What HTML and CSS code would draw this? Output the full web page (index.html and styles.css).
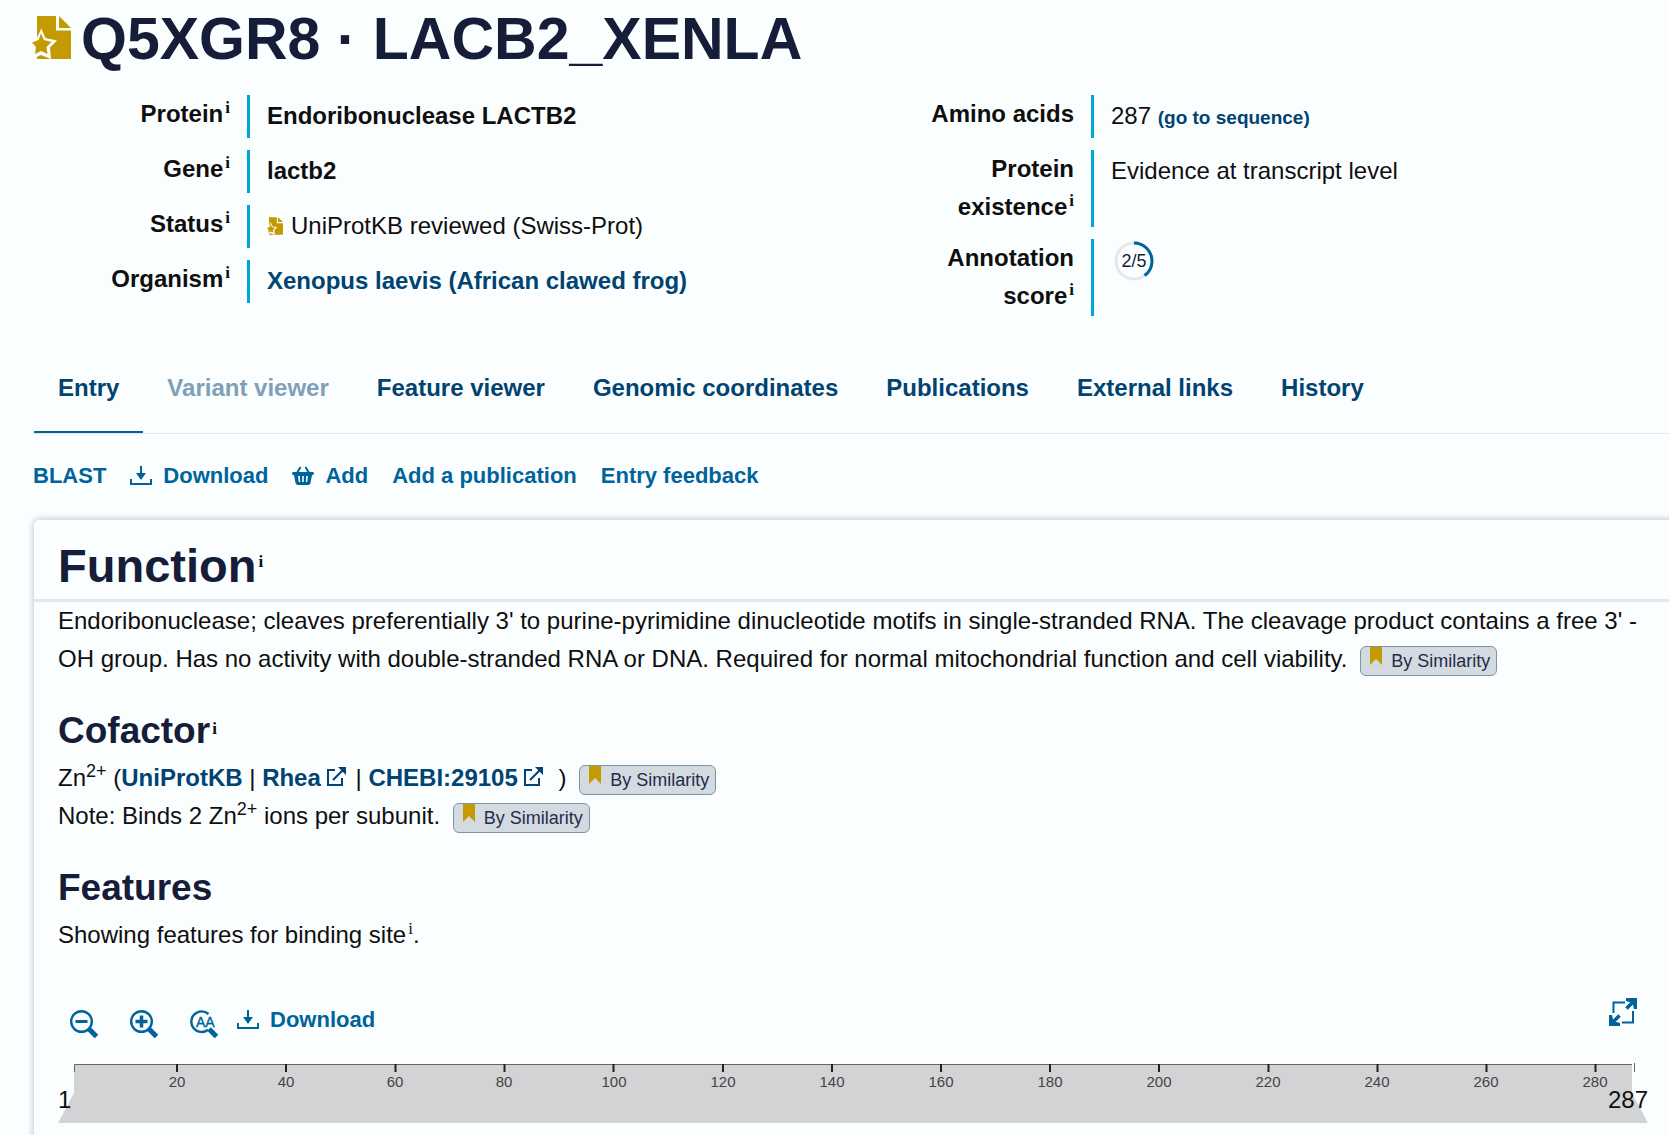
FILE: index.html
```html
<!DOCTYPE html>
<html lang="en">
<head>
<meta charset="utf-8">
<meta name="viewport" content="width=device-width, initial-scale=1">
<title>Q5XGR8 · LACB2_XENLA</title>
<link rel="stylesheet" href="styles.css">
</head>
<body>
<svg class="defs" width="0" height="0" aria-hidden="true">
  <symbol id="reviewed" viewBox="0 0 39 43">
    <path fill="#c39b00" d="M5 0H24V14.500H39V43H5Z"/>
    <path fill="#c39b00" d="M27 0L39 12H27Z"/>
    <path fill="#fbfeff" d="M9 12L13.500 22L25 24.500L18 31.500L19 43L9 39L0 43V12Z"/>
    <path fill="#c39b00" d="M5 0H9V13L5 22ZM9 17.500L12 24L19.500 26L14.500 31L15.500 38L9 35L3 38L4 31L0 26.500L6.500 24Z"/>
    <path fill="#c39b00" d="M5 43L9 41L13 43Z"/>
  </symbol>
  <symbol id="download" viewBox="0 0 22 20">
    <path fill="currentColor" d="M0 13H2V17H20V13H22V19H0ZM10 0H12V7H16L11 14L6 7H10Z"/>
  </symbol>
  <symbol id="basket" viewBox="0 0 22 20">
    <path fill="none" stroke="currentColor" stroke-width="2" d="M5 7L8.500 1M17 7L13.500 1"/>
    <path fill="currentColor" fill-rule="evenodd" d="M1 6H21Q22 6 22 8Q22 9 20 9L18.500 17Q18 19 16 19H6Q4 19 3.500 17L2 9Q0 9 0 8Q0 6 1 6ZM6 10L6.800 16H8.200L7.800 10ZM10.200 10V16H11.800V10ZM14.200 10L13.800 16H15.200L16 10Z"/>
  </symbol>
  <symbol id="external" viewBox="0 0 20 20">
    <path fill="none" stroke="currentColor" stroke-width="2" d="M9 3H2V18H16V11M7 13L17 3"/>
    <path fill="currentColor" d="M12 0H20V8L17.500 5.500L14.500 2.500Z"/>
  </symbol>
  <symbol id="lens" viewBox="0 0 28 28">
    <circle cx="11.500" cy="11.500" r="10.300" fill="none" stroke="currentColor" stroke-width="2.400"/>
    <path fill="none" stroke="currentColor" stroke-width="5" stroke-linejoin="round" d="M18.500 18.500L26.500 26.500"/>
  </symbol>
</svg>

<header class="entry-header">
  <h1 class="entry-title"><svg class="title-icon" aria-hidden="true"><use href="#reviewed"/></svg><span>Q5XGR8 · LACB2_XENLA</span></h1>
  <div class="facts">
    <dl class="fact-list">
      <div class="fact"><dt>Protein<sup class="info">i</sup></dt><dd><strong>Endoribonuclease LACTB2</strong></dd></div>
      <div class="fact"><dt>Gene<sup class="info">i</sup></dt><dd><strong>lactb2</strong></dd></div>
      <div class="fact"><dt>Status<sup class="info">i</sup></dt><dd><svg class="status-icon" aria-hidden="true"><use href="#reviewed"/></svg>UniProtKB reviewed (Swiss-Prot)</dd></div>
      <div class="fact"><dt>Organism<sup class="info">i</sup></dt><dd><a href="#organism">Xenopus laevis (African clawed frog)</a></dd></div>
    </dl>
    <dl class="fact-list">
      <div class="fact"><dt>Amino acids</dt><dd>287 <a class="small-link" href="#sequence">(go to sequence)</a></dd></div>
      <div class="fact"><dt>Protein existence<sup class="info">i</sup></dt><dd>Evidence at transcript level</dd></div>
      <div class="fact"><dt>Annotation score<sup class="info">i</sup></dt><dd>
        <svg class="score" viewBox="0 0 40 40" role="img" aria-label="2 out of 5">
          <circle cx="20" cy="20" r="18" fill="none" stroke="#e4e8eb" stroke-width="3"/>
          <circle cx="20" cy="20" r="18" fill="none" stroke="#00639a" stroke-width="3" pathLength="5" stroke-dasharray="2 3" transform="rotate(-90 20 20)"/>
          <text x="20" y="26" text-anchor="middle">2/5</text>
        </svg></dd></div>
    </dl>
  </div>
</header>

<nav class="tabs">
  <a class="tab active" href="#entry">Entry</a>
  <a class="tab disabled" href="#variant" aria-disabled="true">Variant viewer</a>
  <a class="tab" href="#feature">Feature viewer</a>
  <a class="tab" href="#genomic">Genomic coordinates</a>
  <a class="tab" href="#publications">Publications</a>
  <a class="tab" href="#links">External links</a>
  <a class="tab" href="#history">History</a>
</nav>

<div class="actions">
  <button class="action">BLAST</button>
  <button class="action"><svg class="action-icon" aria-hidden="true"><use href="#download"/></svg>Download</button>
  <button class="action"><svg class="action-icon" aria-hidden="true"><use href="#basket"/></svg>Add</button>
  <a class="action" href="#add-publication">Add a publication</a>
  <a class="action" href="#feedback">Entry feedback</a>
</div>

<main class="card">
  <div class="card-header"><h2>Function<sup class="info">i</sup></h2></div>
  <div class="card-body">
    <p>Endoribonuclease; cleaves preferentially 3' to purine-pyrimidine dinucleotide motifs in single-stranded RNA. The cleavage product contains a free 3' -OH group. Has no activity with double-stranded RNA or DNA. Required for normal mitochondrial function and cell viability. <button class="evidence"><svg class="ribbon" viewBox="0 0 12 18" aria-hidden="true"><path d="M0 0H12V18L6 12L0 18Z"/></svg>By Similarity</button></p>

    <h3>Cofactor<sup class="info">i</sup></h3>
    <p>Zn<sup class="charge">2+</sup> (<a href="#uniprotkb">UniProtKB</a> | <a href="#rhea">Rhea<svg class="ext" aria-hidden="true"><use href="#external"/></svg></a> | <a href="#chebi">CHEBI:29105<svg class="ext last" aria-hidden="true"><use href="#external"/></svg></a> ) <button class="evidence"><svg class="ribbon" viewBox="0 0 12 18" aria-hidden="true"><path d="M0 0H12V18L6 12L0 18Z"/></svg>By Similarity</button></p>
    <p>Note: Binds 2 Zn<sup class="charge">2+</sup> ions per subunit. <button class="evidence"><svg class="ribbon" viewBox="0 0 12 18" aria-hidden="true"><path d="M0 0H12V18L6 12L0 18Z"/></svg>By Similarity</button></p>

    <h3>Features</h3>
    <p>Showing features for binding site<sup class="info">i</sup>.</p>

    <div class="viewer-tools">
      <button class="tool" aria-label="Zoom out"><svg viewBox="0 0 28 28"><use href="#lens"/><path fill="none" stroke="currentColor" stroke-width="3" d="M5.500 11.500H17.500"/></svg></button>
      <button class="tool" aria-label="Zoom in"><svg viewBox="0 0 28 28"><use href="#lens"/><path fill="none" stroke="currentColor" stroke-width="3.500" d="M5.500 11.500H17.500M11.500 5.500V17.500"/></svg></button>
      <button class="tool" aria-label="Zoom to residues"><svg viewBox="0 0 28 28"><path fill="none" stroke="currentColor" stroke-width="2.400" d="M18.500 4A10.300 10.300 0 1 0 18 19.700"/><path fill="none" stroke="currentColor" stroke-width="5" d="M19 19L26.500 26.500"/><text class="residues" x="6" y="17">AA</text></svg></button>
      <button class="action tool-download"><svg class="action-icon" aria-hidden="true"><use href="#download"/></svg>Download</button>
      <button class="tool expand" aria-label="Full screen"><svg viewBox="0 0 28 28"><path fill="none" stroke="currentColor" stroke-width="2" d="M4.500 15V4.500H16M24 13V24.500H13"/><path fill="none" stroke="currentColor" stroke-width="3.500" d="M17.500 10.500L25 3M10.500 17.500L3 25"/><path fill="currentColor" d="M17 0H28V11H25L23.500 5L17 3ZM0 17H3L4.500 23L11 25V28H0Z"/></svg></button>
    </div>

    <svg class="ruler" viewBox="0 0 1590 63" role="img" aria-label="Sequence positions 1 to 287">
      <path class="range" d="M16 3H1574V32L1590 62H0L16 32Z"/>
      <g class="bounds"><text x="0" y="47">1</text><text x="1590" y="47" text-anchor="end">287</text></g>
      <path class="axis" d="M16.500 11V3.500H1574M1576.500 2V11"/>
      <path class="ticks" d="M119 3v8M228 3v8M337.500 3v8M446.500 3v8M555.500 3v8M665 3v8M774 3v8M883 3v8M992 3v8M1101 3v8M1210.500 3v8M1319.500 3v8M1428.500 3v8M1537.500 3v8"/>
      <g class="numbers">
        <text x="119" y="26">20</text><text x="228" y="26">40</text><text x="337" y="26">60</text><text x="446" y="26">80</text><text x="556" y="26">100</text><text x="665" y="26">120</text><text x="774" y="26">140</text><text x="883" y="26">160</text><text x="992" y="26">180</text><text x="1101" y="26">200</text><text x="1210" y="26">220</text><text x="1319" y="26">240</text><text x="1428" y="26">260</text><text x="1537" y="26">280</text>
      </g>
    </svg>
  </div>
</main>
</body>
</html>
```
FILE: styles.css
```css
* { box-sizing: border-box; }

body {
  margin: 0;
  padding: 4px 0 0 34px;
  overflow-x: hidden;
  background: #fbfeff;
  color: #0f0f0f;
  font: 24px/38px "Liberation Sans", Arial, sans-serif;
}

.defs { position: absolute; }

a { color: #014371; font-weight: bold; text-decoration: none; }

h1, h2, h3, p, dl, dd { margin: 0; }

button {
  padding: 0;
  border: 0;
  background: none;
  font-family: inherit;
  cursor: pointer;
}

.info {
  margin-left: 2px;
  font-family: "Liberation Serif", "Times New Roman", serif;
  font-size: 17px;
  line-height: 1;
  color: #0f0f0f;
  vertical-align: 9px;
}

.entry-title {
  display: flex;
  align-items: flex-start;
  gap: 10px;
  margin-left: -2px;
  color: #161d39;
  font-size: 59px;
  line-height: 70px;
}

.title-icon { width: 39px; height: 43px; margin-top: 12px; }

.facts {
  display: grid;
  grid-template-columns: 844fr 791fr;
  margin: 21px 0 29px;
}

.fact-list { display: flex; flex-direction: column; gap: 12px; }

.fact { display: grid; grid-template-columns: 213px 1fr; }

.fact dt { padding: 0 17px 1px 0; font-weight: bold; text-align: right; }

.fact dd { padding: 2px 0 3px 17px; border-left: 3px solid #00a6d5; }

.status-icon { width: 16px; height: 18px; margin-right: 8px; vertical-align: -1px; }

.small-link { font-size: 19px; line-height: 1; }

.score { display: block; width: 40px; height: 40px; margin-left: 3px; }

.score text { fill: #161d39; font-size: 18px; }

.tabs { display: flex; border-bottom: 1px solid #e4e8eb; }

.tab { padding: 24px; border-bottom: 2px solid transparent; }

.tab.active { border-bottom-color: #00639a; }

.tab.disabled { color: #809fb8; }

.actions { display: flex; gap: 24px; margin: 24px 0 27px -1px; }

.action {
  display: flex;
  align-items: center;
  gap: 11px;
  color: #00639a;
  font-size: 22px;
  font-weight: bold;
  line-height: 35px;
}

.action-icon { width: 22px; height: 20px; }

.card {
  margin-right: -8px;
  border-radius: 5px;
  background: #fbfeff;
  box-shadow: 0 0 6px 1px #c3c7d2;
}

.card-header { padding: 17px 24px 4px; border-bottom: 3px solid #e4e8eb; }

.card-body { padding: 0 29px 24px 24px; }

h2, h3 { color: #161d39; }

h2 { font-size: 47px; line-height: 58px; }

h2 .info { vertical-align: 15px; }

h3 { margin: 30px 0 5px; font-size: 37px; line-height: 46px; }

.charge { font-size: 18px; line-height: 1; vertical-align: 9px; }

.ext { width: 20px; height: 20px; margin: 0 3px 0 5px; vertical-align: -1px; }

.ext.last { margin-right: 9px; }

.evidence {
  display: inline-flex;
  gap: 9px;
  margin-left: 6px;
  padding: 0 6px 0 9px;
  border: 1px solid #7d93a6;
  border-radius: 6px;
  background: #d3dbe1;
  color: #272b4b;
  font-size: 18px;
  line-height: 28px;
  vertical-align: 2px;
}

.ribbon { width: 12px; height: 18px; fill: #c39b00; }

.viewer-tools {
  display: flex;
  align-items: flex-start;
  margin: 44px 11px 23px 12px;
}

.tool { width: 28px; height: 28px; margin: 12px 32px 0 0; color: #00639a; }

.tool svg { display: block; width: 28px; height: 28px; }

.residues { fill: currentColor; stroke: currentColor; stroke-width: .4; font-size: 14px; }

.tool-download { margin: 4px 0 0 -13px; }

.tool.expand { margin: 0 0 0 auto; }

.ruler { display: block; width: 100%; }

.bounds { fill: #0f0f0f; font-size: 24px; }

.range { fill: #d3d3d5; }

.axis { fill: none; stroke: #666; stroke-width: 1; }

.ticks { stroke: #222; stroke-width: 2; }

.numbers { fill: #444; font-size: 15px; text-anchor: middle; }
```
